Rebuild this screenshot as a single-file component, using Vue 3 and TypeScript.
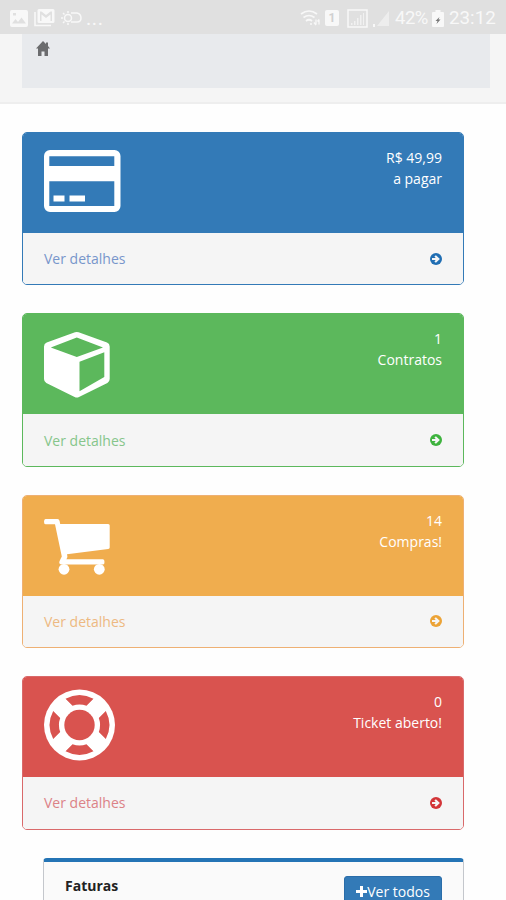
<script setup lang="ts">
type IconName = 'card' | 'cube' | 'cart' | 'ring'

interface Tile {
  tone: string
  icon: IconName
  value: string
  label: string
}

const tiles: Tile[] = [
  { tone: 'blue', icon: 'card', value: 'R$ 49,99', label: 'a pagar' },
  { tone: 'green', icon: 'cube', value: '1', label: 'Contratos' },
  { tone: 'yellow', icon: 'cart', value: '14', label: 'Compras!' },
  { tone: 'red', icon: 'ring', value: '0', label: 'Ticket aberto!' },
]
</script>

<template>
  <div class="screen">
    <header class="status">
      <div class="status-left">
        <svg class="s-img" width="18" height="17" viewBox="0 0 18 17">
          <path fill-rule="evenodd" d="M2 0h14a2 2 0 0 1 2 2v13a2 2 0 0 1-2 2H2a2 2 0 0 1-2-2V2a2 2 0 0 1 2-2zM2 13.500h14l-4.500-6-3.500 4.500-2.500-3zM3 3v2.500h3V3z" />
        </svg>
        <svg class="s-mail" width="21" height="18" viewBox="0 0 21 18">
          <path d="M1 3v13.500h16" fill="none" stroke="#f8f8f8" stroke-width="1.600" />
          <path fill-rule="evenodd" d="M5 0h14a1.500 1.500 0 0 1 1.500 1.500v11a1.500 1.500 0 0 1-1.500 1.500H5a1.500 1.500 0 0 1-1.500-1.500v-11A1.500 1.500 0 0 1 5 0zM6 2.500V12h1.500V5.500l4.500 3.500 4.500-3.500V12H18V2.500h-1.500L12 6 7.500 2.500z" />
        </svg>
        <svg class="s-weather" width="21" height="16" viewBox="0 0 21 16" fill="none" stroke="#f8f8f8" stroke-width="1.500">
          <circle cx="7" cy="8" r="3.500" />
          <path d="M7 1v2M2 3l1.500 1.500M0 8h2M2 13l1.500-1.500M7 13v2M10 3h6q4 1 4 5t-4 4h-6" />
        </svg>
        <span class="dots">...</span>
      </div>
      <div class="status-right">
        <svg width="22" height="18" viewBox="0 0 22 18" fill="none" stroke="#f8f8f8" stroke-width="1.700">
          <path d="M1 5q8-6 16 0M3.500 8.500q5.500-4 11 0M6 12q3-2.500 6 0" />
          <path d="M16 10.500v5M14 13.500l2 2.500M19 15.500v-5M17.500 12.500l1.500-2" stroke-width="1.300" />
          <circle cx="11" cy="15" r="1" fill="#f8f8f8" stroke="none" />
        </svg>
        <span class="sim">1</span>
        <svg class="boxed" width="21" height="19" viewBox="0 0 21 19">
          <path fill="none" stroke="#f8f8f8" stroke-width="1.500" d="M1 1h19v17H1z" />
          <path opacity=".7" d="M4 14h1.500v2H4zM7 12h1.500v4H7zM10 9h1.500v7H10zM13 6h1.500v10H13zM16 4h1v12h-1z" />
        </svg>
        <svg class="signal" width="17" height="17" viewBox="0 0 17 17">
          <path d="M0 14h2v3H0z" />
          <path opacity=".55" d="M16 1v15H4z" />
        </svg>
        <span class="percent">42%</span>
        <svg class="battery" width="12" height="17" viewBox="0 0 12 17">
          <path d="M3.500 0h5v2H11a1 1 0 0 1 1 1v13a1 1 0 0 1-1 1H1a1 1 0 0 1-1-1V3a1 1 0 0 1 1-1h2.500z" />
          <path fill="#777" d="M7.500 7 3.500 11h2L4.500 14l4-4.500h-2z" />
        </svg>
        <span class="clock">23:12</span>
      </div>
    </header>

    <nav class="crumbs">
      <div class="crumb-box">
        <svg width="14" height="15" viewBox="0 0 14 15" fill="#6b6c6e">
          <path d="M7 0 0 7.500h2V15h3.500v-4.500h3V15H12V7.500h2L12 5V1.500h-2V3z" />
        </svg>
      </div>
    </nav>

    <main class="content">
      <section v-for="tile in tiles" :key="tile.tone" class="tile" :class="tile.tone">
        <div class="tile-head">
          <svg class="tile-icon" width="77" height="72" viewBox="0 0 77 72" fill="#fff">
            <path
              v-if="tile.icon === 'card'"
              fill-rule="evenodd"
              d="M6 5h64.500a6 6 0 0 1 6 6v50a6 6 0 0 1-6 6H6a6 6 0 0 1-6-6V11a6 6 0 0 1 6-6zM5.300 11.300V21h65v-9.700zM5.300 36.300V61h65V36.300zM9.500 50.500h11v6h-11zM25.500 50.500h15.500v6H25.500z"
            />
            <path
              v-else-if="tile.icon === 'cube'"
              fill-rule="evenodd"
              d="M31 6.300q1.800-.6 3.600 0L63 16.600q2.700 1.100 2.700 4V53q0 2.500-2.300 4L35 71q-2.200 1-4.400 0L2.300 57Q0 55.700 0 53V20.600q0-2.900 2.700-4zM6.800 21.500 32.800 31l26.200-9.500-26.200-10zM35.500 35.700v29.500L60.300 51V26.300z"
            />
            <g v-else-if="tile.icon === 'cart'">
              <path d="M1.500 11h12q1.700 0 2.100 2l.6 3h48q1.500 0 1.500 1.500v22q0 1.300-1.500 1.500L23 46.200l.4 2.300q0 1-1 2.700H59q1.500 0 1.500 2.700T59 56.600H17.500q-2.300 0-2.300-2.300 0-.8 2.600-5.800L11 16.300H1.500Q0 16.300 0 13.700T1.500 11z" />
              <circle cx="20" cy="61.300" r="5.400" />
              <circle cx="55.300" cy="61.300" r="5.400" />
            </g>
            <g v-else transform="translate(35.500 36)">
              <circle r="35.500" />
              <circle class="hole" r="15.200" />
              <path
                v-for="angle in [0, 90, 180, 270]"
                :key="angle"
                class="hole"
                :transform="`rotate(${angle})`"
                d="M-14-26.300A29.800 29.800 0 0 1 14-26.300L7-19.300A20.500 20.500 0 0 0-7-19.300z"
              />
            </g>
          </svg>
          <div class="figures">
            <div>{{ tile.value }}</div>
            <div>{{ tile.label }}</div>
          </div>
        </div>
        <a class="tile-foot">
          <span class="detail">Ver detalhes</span>
          <svg width="12" height="12" viewBox="0 0 12 12">
            <circle cx="6" cy="6" r="6" fill="currentColor" />
            <path d="M2 5h3.700L4.400 3.600 5.900 2.200 9.900 6l-4 3.800-1.500-1.400L5.700 7H2z" fill="#f5f5f5" />
          </svg>
        </a>
      </section>

      <section class="invoices">
        <h2>Faturas</h2>
        <button type="button">
          <svg width="11" height="11" viewBox="0 0 11 11" fill="#fff">
            <path d="M4 0h3v4h4v3H7v4H4V7H0V4h4z" />
          </svg>
          <span>Ver todos</span>
        </button>
      </section>
    </main>
  </div>
</template>

<style>
body {
  background: #fefefe;
  overflow: hidden;
}
</style>

<style scoped>
.screen {
  height: 900px;
  overflow: hidden;
  font-family: 'Open Sans', sans-serif;
  font-size: 14px;
  line-height: 21px;
}
.status {
  box-sizing: border-box;
  height: 34px;
  padding: 2px 10px 0;
  display: flex;
  justify-content: space-between;
  background: #e0e0e0;
  color: #f8f8f8;
  fill: #f8f8f8;
  font-family: Roboto, sans-serif;
}
.status-left,
.status-right {
  display: flex;
  align-items: center;
}
.s-mail {
  margin-left: 6px;
}
.s-weather {
  margin-left: 6px;
}
.dots {
  margin-left: 4px;
  font-size: 20px;
  letter-spacing: 0.6px;
}
.sim {
  margin-left: 3px;
  width: 14px;
  height: 16px;
  border-radius: 2px;
  background: #f8f8f8;
  color: #d0d0d0;
  font-size: 12px;
  font-weight: 700;
  line-height: 17px;
  text-align: center;
}
.boxed {
  margin-left: 8px;
}
.signal {
  margin-left: 5px;
}
.percent {
  margin-left: 5px;
  font-size: 18.5px;
  width: 34px;
  letter-spacing: -0.5px;
}
.battery {
  margin-left: 3px;
}
.clock {
  margin-left: 5px;
  width: 47px;
  font-size: 18.8px;
}
.crumbs {
  box-sizing: border-box;
  height: 70px;
  padding: 0 16px 0 22px;
  background: #f5f5f5;
  border-bottom: 2px solid #eee;
}
.crumb-box {
  box-sizing: border-box;
  height: 54px;
  padding: 7px 14px;
  background: #e8eaed;
}
.crumb-box svg {
  display: block;
}
.content {
  padding: 28px 42px 0 22px;
  display: flex;
  flex-direction: column;
  gap: 28px;
}
.tile {
  box-sizing: border-box;
  height: 153.4px;
  border: 1.5px solid var(--line);
  border-radius: 5px;
  overflow: hidden;
  flex: none;
  display: flex;
  flex-direction: column;
}
.blue {
  --fill: #337ab7;
  --line: #337ab7;
  --text: #7896cb;
  --arrow: #206eb3;
}
.green {
  --fill: #5cb85c;
  --line: #5cb85c;
  --text: #86c58b;
  --arrow: #3eb33e;
}
.yellow {
  --fill: #f0ad4e;
  --line: #eeb073;
  --text: #edb982;
  --arrow: #eca336;
}
.red {
  --fill: #d9534f;
  --line: #d9696a;
  --text: #dc8287;
  --arrow: #d33538;
}
.tile-head {
  box-sizing: border-box;
  height: 100px;
  padding: 12px 21px 0;
  display: flex;
  justify-content: space-between;
  background: var(--fill);
  color: #fff;
}
.tile-icon {
  display: block;
}
.hole {
  fill: var(--fill);
}
.figures {
  padding-top: 1.9px;
  text-align: right;
}
.tile-foot {
  flex: 1;
  padding: 0 21px;
  display: flex;
  align-items: center;
  justify-content: space-between;
  background: #f5f5f5;
  color: var(--arrow);
}
.detail {
  color: var(--text);
}
.invoices {
  box-sizing: border-box;
  flex: none;
  height: 80px;
  margin-left: 21px;
  padding: 14px 21px 0;
  display: flex;
  justify-content: space-between;
  border: 1px solid #c4c7cc;
  border-top: 4px solid #2474b5;
  border-radius: 4px;
  background: #fafafa;
}
.invoices h2 {
  margin: -1px 0 0;
  font-size: 14px;
  line-height: 21px;
  font-weight: 700;
  color: #222;
}
.invoices button {
  box-sizing: border-box;
  width: 98px;
  height: 32px;
  padding: 0;
  display: flex;
  align-items: center;
  justify-content: center;
  border: 1px solid #2a6da9;
  border-radius: 3px;
  background: #337ab7;
  color: #fff;
  font: inherit;
}
</style>
